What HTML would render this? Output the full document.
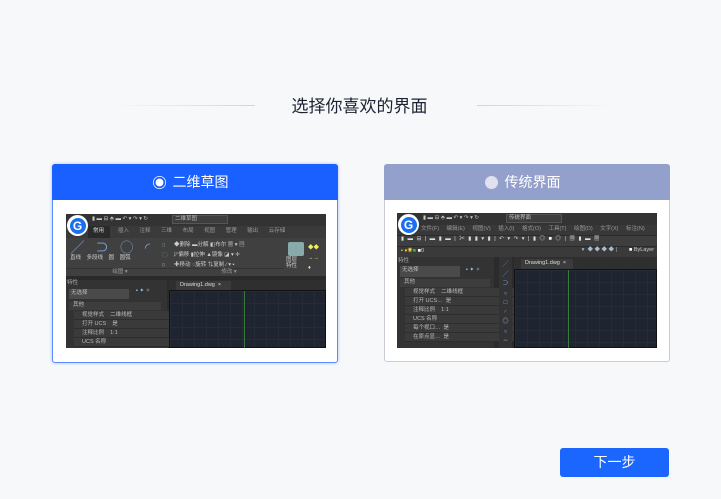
<!DOCTYPE html>
<html><head><meta charset="utf-8">
<style>
*{margin:0;padding:0;box-sizing:border-box}
body{width:721px;height:499px;background:#f7f8fa;font-family:"Liberation Sans","Noto Sans CJK SC",sans-serif;position:relative;overflow:hidden}
.a{position:absolute}
.title{left:0;width:721px;top:95px;text-align:center;font-size:17px;color:#1d2233;line-height:24px;padding-right:2px}
.line{height:1px;top:105px;width:140px}
.card{background:#fff;border-radius:3px}
.hd{position:absolute;left:0;right:0;top:0;height:36px;color:#fff;font-size:14px;line-height:36px;text-align:center;padding-right:9px}
.rad{display:inline-block;width:13px;height:13px;border-radius:50%;vertical-align:-2px;margin-right:7px}
.shot{background:#2b2b2b;overflow:hidden;font-size:5.5px;color:#bbb;line-height:1}
.shot div{position:absolute}
.logo{width:21px;height:21px;border-radius:50%;background:#fff;left:1px;top:1px}
.logo i{position:absolute;left:2.5px;top:2.5px;width:16px;height:16px;border-radius:50%;background:#1a6ff0;color:#fff;font-style:normal;font-weight:bold;font-size:12px;text-align:center;line-height:16px}
.grid{background-color:#1e2430;background-image:linear-gradient(#252c38 1px,transparent 1px),linear-gradient(90deg,#252c38 1px,transparent 1px);background-size:12px 12px}
.row{height:9px;left:8px;right:6px;background:#3a3a3a;border-bottom:1px solid #2e2e2e;padding:2px 0 0 8px;white-space:nowrap}
</style></head><body>
<div class="a title">选择你喜欢的界面</div>
<div class="a line" style="left:115px;background:linear-gradient(90deg,rgba(210,212,218,0),#d2d4da)"></div>
<div class="a line" style="left:477px;background:linear-gradient(90deg,#d2d4da,rgba(210,212,218,0))"></div>

<!-- card 1 -->
<div class="a card" style="left:52px;top:164px;width:286px;height:199px;border:1px solid #5a8cff;box-shadow:0 0 3px rgba(60,110,255,.4)">
 <div class="hd" style="background:#1a5fff;left:-1px;right:-1px;top:-1px;border-radius:3px 3px 0 0"><span class="rad" style="background:radial-gradient(#fff 40%,#1a5fff 45%,#1a5fff 60%,#fff 65%)"></span>二维草图</div>
 <div class="a shot" style="left:13px;top:49px;width:260px;height:134px">
  <div style="left:0;top:0;width:260px;height:12px;background:#333"></div>
  <div style="left:26px;top:3px;color:#ccc">▮ ▬ ⊟ ⬘ ▬ ↶ ▾ ↷ ▾ ↻</div>
  <div style="left:106px;top:1px;width:56px;height:9px;background:#3e3e3e;border:1px solid #555;padding:1px 2px">二维草图</div>
  <div style="left:0;top:12px;width:260px;height:12px;background:#3a3a3a"></div>
  <div style="left:22px;top:12px;width:22px;height:12px;background:#2a2a2a;color:#ddd;padding:3px 5px">常用</div>
  <div style="left:52px;top:15px;word-spacing:9px;color:#999;white-space:nowrap">插入 注释 三维 布局 视图 管理 输出 云存储</div>
  <div style="left:0;top:24px;width:260px;height:38px;background:#404040"></div>
  <div style="left:5px;top:27px;font-size:13px;color:#7aa8e8;letter-spacing:4px;white-space:nowrap">╱ ⊃ ◯ ◜</div>
  <div style="left:4px;top:42px;color:#ccc;word-spacing:4px;white-space:nowrap">直线 多段线 圆 圆弧</div>
  <div style="left:96px;top:27px;color:#8ab;line-height:10px">⁝⁝<br>◯<br>⌑</div>
  <div style="left:0;top:54px;width:108px;height:8px;border-top:1px solid #333;color:#999;text-align:center;padding-top:1px">绘图 ▾</div>
  <div style="left:108px;top:26px;color:#ccc;line-height:10px;white-space:nowrap">◆删除 ▬分解 ◧布尔 ▦ ▾ ▤<br>◸偏移 ▮拉伸 ▲镜像 ◪ ▾ ✛<br>✚移动 ◌旋转 ⇅复制 ∕ ▾ ▪</div>
  <div style="left:108px;top:54px;width:110px;height:8px;border-top:1px solid #333;color:#999;text-align:center;padding-top:1px">修改 ▾</div>
  <div style="left:222px;top:28px;width:16px;height:14px;background:#8aa;border-radius:2px"></div>
  <div style="left:220px;top:44px;color:#ccc">图层<br>特性</div>
  <div style="left:242px;top:29px;color:#ee6;line-height:10px">◆◆<br>→→<br>♦</div>
  <div style="left:0;top:62px;width:260px;height:4px;background:#2a2a2a"></div>
  <div style="left:0;top:66px;width:101px;height:68px;background:#333"></div>
  <div style="left:1px;top:67px;color:#aaa">特性</div>
  <div style="left:3px;top:75px;width:60px;height:10px;background:#4a4a4a;padding:2px">无选择</div>
  <div style="left:70px;top:75px;color:#9cf">▪ ✦ ✧</div>
  <div style="left:3px;top:88px;width:92px;height:8px;background:#3d3d3d;padding:1px 4px">其他</div>
  <div class="row" style="top:97px">视觉样式 &nbsp;&nbsp;&nbsp;二维线框</div>
  <div class="row" style="top:106px">打开 UCS &nbsp;&nbsp;&nbsp;是</div>
  <div class="row" style="top:115px">注释比例 &nbsp;&nbsp;&nbsp;1:1</div>
  <div class="row" style="top:124px">UCS 名称</div>
  <div style="left:103px;top:66px;width:157px;height:10px;background:#2f2f2f"></div>
  <div style="left:110px;top:67px;width:55px;height:9px;background:#3b3b3b;color:#ddd;padding:2px 4px;white-space:nowrap">Drawing1.dwg &nbsp;×</div>
  <div class="grid" style="left:103px;top:76px;width:157px;height:58px;border:1px solid #111"></div>
  <div style="left:178px;top:77px;width:1px;height:57px;background:#3a7a3a"></div>
  <div class="logo"><i>G</i></div>
 </div>
</div>

<!-- card 2 -->
<div class="a card" style="left:384px;top:164px;width:286px;height:198px;border:1px solid #c9ccd8">
 <div class="hd" style="background:#93a0cb;left:-1px;right:-1px;top:-1px;border-radius:3px 3px 0 0"><span class="rad" style="background:#dfe2ee"></span>传统界面</div>
 <div class="a shot" style="left:12px;top:48px;width:260px;height:135px">
  <div style="left:0;top:0;width:260px;height:12px;background:#333"></div>
  <div style="left:26px;top:3px;color:#ccc">▮ ▬ ⊟ ⬘ ▬ ↶ ▾ ↷ ▾ ↻</div>
  <div style="left:109px;top:1px;width:56px;height:9px;background:#3e3e3e;border:1px solid #555;padding:1px 2px">传统界面</div>
  <div style="left:0;top:12px;width:260px;height:10px;background:#383838"></div>
  <div style="left:24px;top:14px;color:#999;word-spacing:6px;white-space:nowrap">文件(F) 编辑(E) 视图(V) 插入(I) 格式(O) 工具(T) 绘图(D) 文字(X) 标注(N)</div>
  <div style="left:0;top:22px;width:260px;height:11px;background:#3e3e3e;border-top:1px solid #2a2a2a"></div>
  <div style="left:4px;top:24px;color:#ddd;letter-spacing:1px;white-space:nowrap">▮ ▬ ⊟ | ▬ ▮ ▬ | ✂ ▮ ▮ ▾ ▮ | ↶ ▾ ↷ ▾ | ▮ ◎ <span style="color:#fff">■</span> ◎ | ▦ ▮ ▬ ▦</div>
  <div style="left:0;top:33px;width:260px;height:11px;background:#3a3a3a;border-top:1px solid #2a2a2a"></div>
  <div style="left:4px;top:36px;color:#ec4;white-space:nowrap">▪ ♦☀<span style="color:#4a4">■</span> <span style="color:#fff">■</span><span style="color:#ccc">0</span></div>
  <div style="left:100px;top:35px;width:120px;height:8px;color:#abc;text-align:right">▾ &nbsp;◆ ◆ ◆ ◆ |</div>
  <div style="left:232px;top:35px;color:#ccc;white-space:nowrap"><span style="color:#fff">■</span> ByLayer</div>
  <div style="left:0;top:44px;width:97px;height:91px;background:#333"></div>
  <div style="left:1px;top:46px;color:#aaa">特性</div>
  <div style="left:3px;top:53px;width:60px;height:11px;background:#4a4a4a;padding:2px">无选择</div>
  <div style="left:69px;top:55px;color:#9cf">▪ ✦ ✧</div>
  <div style="left:3px;top:66px;width:90px;height:8px;background:#3d3d3d;padding:1px 4px">其他</div>
  <div class="row" style="top:75px">视觉样式 &nbsp;&nbsp;&nbsp;二维线框</div>
  <div class="row" style="top:84px">打开 UCS… &nbsp;是</div>
  <div class="row" style="top:93px">注释比例 &nbsp;&nbsp;&nbsp;1:1</div>
  <div class="row" style="top:102px">UCS 名称</div>
  <div class="row" style="top:111px">每个视口… &nbsp;是</div>
  <div class="row" style="top:120px">在原点显… &nbsp;是</div>
  <div style="left:102px;top:44px;width:13px;height:91px;background:#333;color:#8af;font-size:6px;line-height:9.5px;text-align:center;padding-top:4px">╱<br>╱<br>⊃<br>○<br>□<br>◜<br>◎<br>○<br>∼</div>
  <div style="left:117px;top:44px;width:143px;height:12px;background:#2f2f2f"></div>
  <div style="left:124px;top:46px;width:52px;height:10px;background:#3b3b3b;color:#ddd;padding:2px 4px;white-space:nowrap">Drawing1.dwg &nbsp;×</div>
  <div class="grid" style="left:117px;top:56px;width:143px;height:79px;border:1px solid #111"></div>
  <div style="left:171px;top:57px;width:1px;height:78px;background:#3a7a3a"></div>
  <div class="logo"><i>G</i></div>
 </div>
</div>

<div class="a" style="left:560px;top:448px;width:109px;height:29px;background:#1a66ff;border-radius:3px;color:#fff;font-size:14px;text-align:center;line-height:29px">下一步</div>
</body></html>
